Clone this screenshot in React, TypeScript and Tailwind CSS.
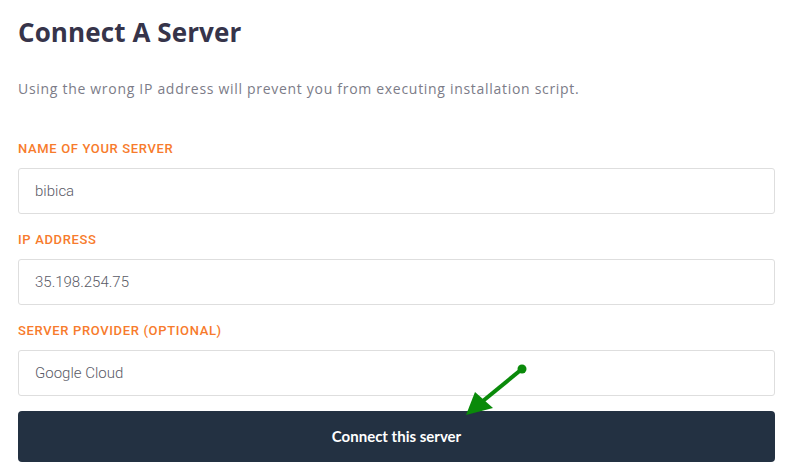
import React from "react";

function Field({ label, value }: { label: string; value: string }) {
  return (
    <div className="flex flex-col">
      <label className="text-[13px] leading-[16px] font-medium tracking-[0.65px] text-[#f77b2c] font-['Roboto',sans-serif]">
        {label}
      </label>
      <div className="mt-[11px] h-[46px] border border-[#dedede] rounded-[3px] flex items-center pl-[16px] text-[15px] text-[#5a5a66] font-['Roboto',sans-serif] font-light">
        {value}
      </div>
    </div>
  );
}

export default function App() {
  return (
    <div className="w-[792px] h-[476px] bg-white overflow-hidden pl-[18px] pr-[17px] relative">
      <h1 className="pt-[15px] text-[26px] leading-[34px] font-bold text-[#36344a] tracking-[0.1px] font-['Open_Sans',sans-serif]">
        Connect A Server
      </h1>
      <p className="mt-[30px] text-[14px] leading-[20px] text-[#7c7c88] tracking-[0.7px] font-['Open_Sans',sans-serif]">
        Using the wrong IP address will prevent you from executing installation script.
      </p>
      <div className="mt-[42px] flex flex-col gap-[18px]">
        <Field label="NAME OF YOUR SERVER" value="bibica" />
        <Field label="IP ADDRESS" value="35.198.254.75" />
        <Field label="SERVER PROVIDER (OPTIONAL)" value="Google Cloud" />
      </div>
      <button className="mt-[15px] w-full h-[51px] rounded-[4px] bg-[#233142] text-white text-[15px] font-bold font-['Lato',sans-serif] flex items-center justify-center">
        Connect this server
      </button>
      <svg className="absolute left-0 top-0 pointer-events-none" width="792" height="476">
        <line x1="522" y1="369" x2="478" y2="405" stroke="#0a8a0a" strokeWidth="4" />
        <circle cx="522" cy="369" r="4.5" fill="#0a8a0a" />
        <polygon points="466,415 475,392 493,408" fill="#0a8a0a" />
      </svg>
    </div>
  );
}
